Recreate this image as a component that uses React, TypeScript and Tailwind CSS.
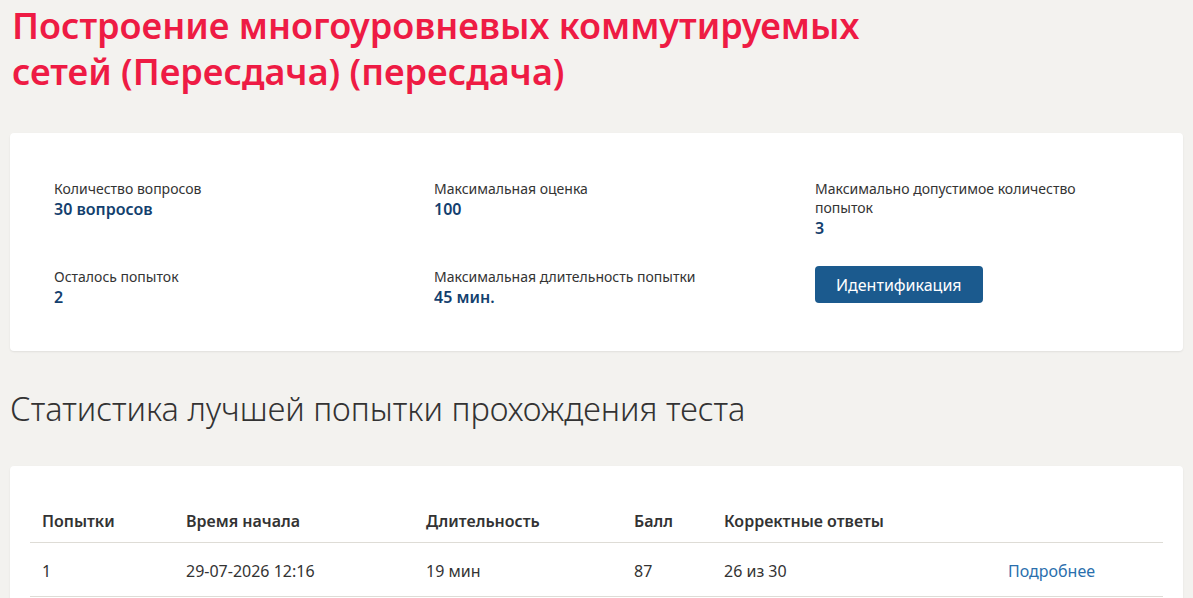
const rows = [
  { attempt: "1", start: "29-07-2026 12:16", duration: "19 мин", score: "87", correct: "26 из 30" },
];

function InfoItem({ label, value }: { label: string; value: string }) {
  return (
    <div className="flex flex-col">
      <p className="text-[14px] leading-[19px] text-[#333]">{label}</p>
      <p className="text-[16px] leading-[22px] font-semibold text-[#133f6e]">{value}</p>
    </div>
  );
}

export default function App() {
  return (
    <div className="min-h-screen bg-[#f3f2ef] px-[10px] pt-[3px] pb-10 font-['Noto_Sans',sans-serif]">
      <h1 className="w-[900px] pl-[2px] text-[36px] leading-[46px] font-semibold text-[#ee1b44]">
        Построение многоуровневых коммутируемых сетей (Пересдача) (пересдача)
      </h1>

      <div className="mt-[38px] bg-white rounded-[4px] shadow-[0_1px_2px_rgba(0,0,0,0.08)] px-[44px] pt-[46px] pb-[43px]">
        <div className="grid grid-cols-[380px_381px_1fr] gap-y-[28px]">
          <InfoItem label="Количество вопросов" value="30 вопросов" />
          <InfoItem label="Максимальная оценка" value="100" />
          <div className="w-[280px]">
            <InfoItem label="Максимально допустимое количество попыток" value="3" />
          </div>
          <InfoItem label="Осталось попыток" value="2" />
          <InfoItem label="Максимальная длительность попытки" value="45 мин." />
          <div className="-mt-[1px]">
            <button className="h-[37px] px-[21px] rounded-[4px] bg-[#1b5a8e] text-white text-[16px]">
              Идентификация
            </button>
          </div>
        </div>
      </div>

      <h2 className="mt-[38px] text-[32.5px] leading-[40px] font-light text-[#333]">
        Статистика лучшей попытки прохождения теста
      </h2>

      <div className="mt-[37px] bg-white rounded-[4px] shadow-[0_1px_2px_rgba(0,0,0,0.08)] px-[20px] pt-[33px] pb-[20px]">
        <table className="w-full text-left text-[16px] leading-[24px] text-[#333]">
          <thead>
            <tr className="border-b border-[#dedcd6]">
              <th className="w-[144px] px-3 pt-[10px] pb-[9px] font-semibold">Попытки</th>
              <th className="w-[240px] px-3 pt-[10px] pb-[9px] font-semibold">Время начала</th>
              <th className="w-[208px] px-3 pt-[10px] pb-[9px] font-semibold">Длительность</th>
              <th className="w-[90px] px-3 pt-[10px] pb-[9px] font-semibold">Балл</th>
              <th className="w-[284px] px-3 pt-[10px] pb-[9px] font-semibold">Корректные ответы</th>
              <th className="px-3 pt-[10px] pb-[9px]"></th>
            </tr>
          </thead>
          <tbody>
            {rows.map((r) => (
              <tr key={r.attempt} className="border-b border-[#dedcd6]">
                <td className="px-3 pt-[16px] pb-[13px]">{r.attempt}</td>
                <td className="px-3 pt-[16px] pb-[13px]">{r.start}</td>
                <td className="px-3 pt-[16px] pb-[13px]">{r.duration}</td>
                <td className="px-3 pt-[16px] pb-[13px]">{r.score}</td>
                <td className="px-3 pt-[16px] pb-[13px]">{r.correct}</td>
                <td className="px-3 pt-[16px] pb-[13px]">
                  <a href="#" className="text-[#2a6fad]">Подробнее</a>
                </td>
              </tr>
            ))}
          </tbody>
        </table>
      </div>
    </div>
  );
}
